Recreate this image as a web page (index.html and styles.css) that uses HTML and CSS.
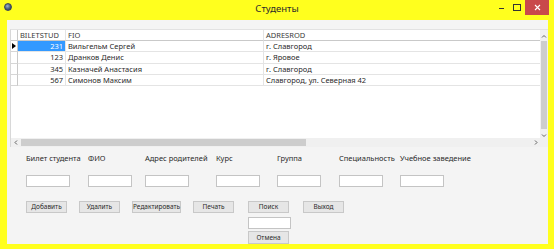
FILE: index.html
```html
<!DOCTYPE html>
<html lang="ru">
<head>
<meta charset="utf-8">
<title>Студенты</title>
<link rel="stylesheet" href="styles.css">
</head>
<body>
<div class="window">
  <div class="titlebar">
    <div class="app-icon"></div>
    <div class="title">Студенты</div>
    <div class="controls">
      <span class="ctl min"></span>
      <span class="ctl max"></span>
      <span class="ctl close"><svg width="7" height="7" viewBox="0 0 7 7"><path d="M1 1 L6 6 M6 1 L1 6" stroke="#fff" stroke-width="1.1"/></svg></span>
    </div>
  </div>
  <div class="client">
    <div class="grid">
      <div class="grid-main">
        <div class="table">
          <div class="row head">
            <div class="c rh"></div>
            <div class="c c1">BILETSTUD</div>
            <div class="c c2">FIO</div>
            <div class="c c3">ADRESROD</div>
          </div>
          <div class="row r-a">
            <div class="c rh"><span class="arrow"></span></div>
            <div class="c c1 num sel">231</div>
            <div class="c c2">Вильгельм Сергей</div>
            <div class="c c3">г. Славгород</div>
          </div>
          <div class="row r-b">
            <div class="c rh"></div>
            <div class="c c1 num">123</div>
            <div class="c c2">Дранков Денис</div>
            <div class="c c3">г. Яровое</div>
          </div>
          <div class="row r-a">
            <div class="c rh"></div>
            <div class="c c1 num">345</div>
            <div class="c c2">Казначей Анастасия</div>
            <div class="c c3">г. Славгород</div>
          </div>
          <div class="row r-a">
            <div class="c rh"></div>
            <div class="c c1 num">567</div>
            <div class="c c2">Симонов Максим</div>
            <div class="c c3">Славгород, ул. Северная 42</div>
          </div>
        </div>
        <div class="vscroll">
          <svg class="sarrow" width="8" height="7" viewBox="0 0 8 7"><path d="M2 4.5 L4 2.5 L6 4.5" fill="none" stroke="#606060" stroke-width="1"/></svg>
          <div class="vtrack"><div class="vthumb"></div></div>
          <svg class="sarrow" width="8" height="7" viewBox="0 0 8 7"><path d="M2 2.5 L4 4.5 L6 2.5" fill="none" stroke="#606060" stroke-width="1"/></svg>
        </div>
      </div>
      <div class="hscroll">
        <svg class="harrow" width="8" height="9" viewBox="0 0 8 9"><path d="M5 2.5 L3 4.5 L5 6.5" fill="none" stroke="#606060" stroke-width="1"/></svg>
        <div class="htrack"><div class="hthumb"></div></div>
        <svg class="harrow" width="8" height="9" viewBox="0 0 8 9"><path d="M3 2.5 L5 4.5 L3 6.5" fill="none" stroke="#606060" stroke-width="1"/></svg>
        <div class="corner"></div>
      </div>
    </div>

    <div class="fields">
      <label class="lbl">Билет студента</label>
      <label class="lbl">ФИО</label>
      <label class="lbl">Адрес родителей</label>
      <label class="lbl">Курс</label>
      <label class="lbl">Группа</label>
      <label class="lbl">Специальность</label>
      <label class="lbl">Учебное заведение</label>
      <input class="tb" type="text">
      <input class="tb" type="text">
      <input class="tb" type="text">
      <input class="tb" type="text">
      <input class="tb" type="text">
      <input class="tb" type="text">
      <input class="tb" type="text">
    </div>

    <div class="buttons">
      <button class="btn">Добавить</button>
      <button class="btn">Удалить</button>
      <button class="btn wide">Редактировать</button>
      <button class="btn">Печать</button>
      <div class="search">
        <button class="btn">Поиск</button>
        <input class="tb stb" type="text">
        <button class="btn">Отмена</button>
      </div>
      <button class="btn">Выход</button>
    </div>
  </div>
</div>
</body>
</html>
```

FILE: styles.css
```css
* { box-sizing: border-box; }
html, body { margin: 0; padding: 0; }
body {
  width: 554px;
  height: 249px;
  overflow: hidden;
  font-family: "Noto Sans", "Open Sans", sans-serif;
  background: #ffff1e;
}
.window {
  width: 554px;
  height: 249px;
  display: flex;
  flex-direction: column;
  background: #ffff1e;
}
.titlebar {
  height: 21px;
  position: relative;
  display: flex;
  align-items: center;
  justify-content: center;
}
.app-icon {
  position: absolute;
  left: 4px;
  top: 3px;
  width: 8px;
  height: 8px;
  border-radius: 50%;
  background: radial-gradient(circle at 40% 35%, #9fb3c8 0, #4a5d78 55%, #2c3a4e 100%);
  border: 1px solid #3a4557;
}
.title {
  font-size: 9.5px;
  color: #2a2a2a;
  margin-top: -3px;
}
.controls {
  position: absolute;
  right: 5px;
  top: 0;
  display: flex;
  align-items: flex-start;
}
.ctl {
  display: block;
  position: relative;
}
.min {
  width: 14px;
  height: 15px;
}
.min::after {
  content: "";
  position: absolute;
  left: 4px;
  top: 8px;
  width: 5px;
  height: 1px;
  background: #333;
}
.max {
  width: 14px;
  height: 15px;
  margin-right: 2px;
}
.max::after {
  content: "";
  position: absolute;
  left: 4px;
  top: 4px;
  width: 6px;
  height: 5px;
  border: 1px solid #333;
}
.close {
  width: 24px;
  height: 15px;
  background: #c9494b;
  display: flex;
  align-items: center;
  justify-content: center;
}

.client {
  flex: 1;
  margin: 0 6px 5px 7px;
  background: #f4f4f4;
  padding: 9px 0 0 3px;
  display: flex;
  flex-direction: column;
  font-size: 7.5px;
  color: #2a2a2a;
}

.grid {
  height: 118px;
  background: #fff;
  border-top: 1px solid #e2e2e2;
  border-left: 1px solid #d8d8d8;
  display: flex;
  flex-direction: column;
}
.grid-main {
  flex: 1;
  display: flex;
  min-height: 0;
}
.table {
  flex: 1;
  display: flex;
  flex-direction: column;
}
.row {
  display: flex;
  height: 11px;
}
.row.head { height: 11px; }
.row.r-b { height: 12px; }
.c {
  border-bottom: 1px solid #e4e4e4;
  border-right: 1px solid #e4e4e4;
  padding: 0 2px;
  line-height: 10px;
  white-space: nowrap;
  overflow: hidden;
}
.head .c {
  color: #3a3a3a;
  border-bottom: 1px solid #c9c9c9;
}
.rh {
  width: 7px;
  padding: 0;
  position: relative;
  border-right: 1px solid #c9c9c9;
  border-bottom: 1px solid #d6d6d6;
}
.c1 { width: 48px; }
.c2 { width: 198px; }
.c3 { flex: 1; border-right: none; }
.num { text-align: right; }
.sel {
  background: #3399ff;
  color: #fff;
}
.arrow {
  position: absolute;
  left: 1px;
  top: 2px;
  width: 0;
  height: 0;
  border-top: 3px solid transparent;
  border-bottom: 3px solid transparent;
  border-left: 4px solid #000;
}

.vscroll {
  width: 8px;
  background: #f0f0f0;
  display: flex;
  flex-direction: column;
  align-items: center;
}
.sarrow { flex: none; margin-top: 3px; }
.vtrack {
  flex: 1;
  width: 100%;
  padding: 0 1px;
}
.vthumb {
  margin-top: 1px;
  height: 88px;
  background: #cdcdcd;
}
.hscroll {
  height: 9px;
  background: #f0f0f0;
  display: flex;
  align-items: center;
}
.harrow { flex: none; margin-left: 1px; }
.htrack {
  flex: 1;
  height: 100%;
  padding: 1px 0;
}
.hthumb {
  margin-left: 1px;
  width: 285px;
  height: 100%;
  background: #cdcdcd;
}
.corner { width: 8px; height: 100%; background: #f0f0f0; }

.fields {
  display: grid;
  grid-template-columns: 62px 57px 71px 61px 62px 61px 60px;
  grid-template-rows: 12px 12px;
  row-gap: 11px;
  margin: 5px 0 0 16px;
}
.lbl {
  font-size: 7.5px;
  line-height: 12px;
  color: #2a2a2a;
  white-space: nowrap;
}
.tb {
  width: 44px;
  height: 12px;
  border: 1px solid #c4c4c4;
  background: #fff;
  padding: 0;
  margin: 0;
  font: inherit;
}

.buttons {
  display: flex;
  align-items: flex-start;
  gap: 12px;
  margin: 14px 0 0 16px;
}
.btn {
  width: 41px;
  height: 12px;
  border: 1px solid #c8c8c8;
  background: #e6e6e6;
  padding: 0;
  margin: 0;
  font-family: inherit;
  font-size: 6.5px;
  line-height: 10px;
  color: #2a2a2a;
}
.btn.wide { width: 49px; }
.search {
  display: flex;
  flex-direction: column;
  gap: 4px;
  margin-left: 2px;
}
.search .btn:last-child { height: 13px; margin-top: -2px; }
.stb { width: 43px; height: 12px; }
```
